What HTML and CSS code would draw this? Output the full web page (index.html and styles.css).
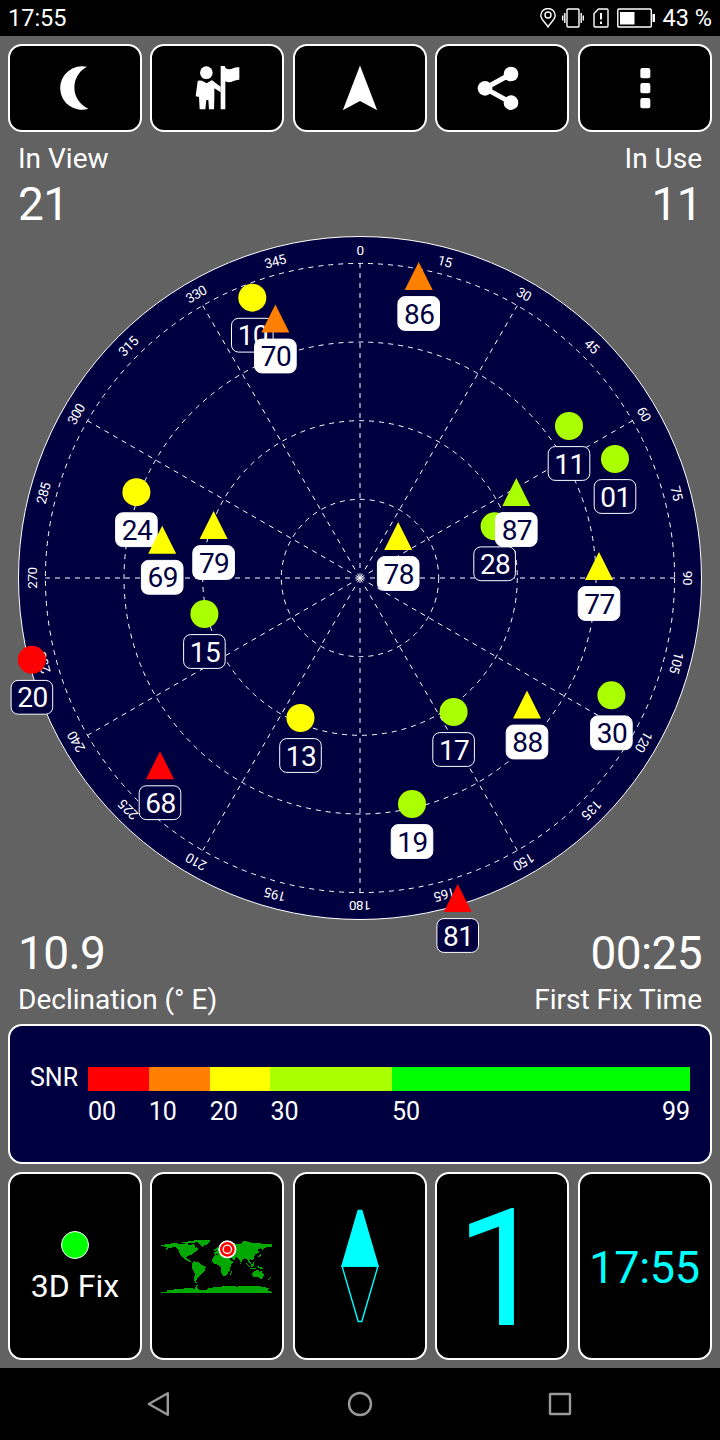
FILE: index.html
```html
<!DOCTYPE html>
<html lang="en">
<head>
    <meta charset="UTF-8">
    <meta name="viewport" content="width=device-width, initial-scale=1.0">
    <title>GPS Status</title>
    <link rel="stylesheet" href="styles.css">
</head>
<body>

    <header class="status-bar">
        <span class="status-time">17:55</span>
        <svg class="pin" width="16" height="20" viewBox="0 0 16 20">
            <path d="M8 19C6 15 .8 11.500 .8 7.500A7.200 7 0 0 1 15.200 7.500C15.200 11.500 10 15 8 19Z"/>
            <circle cx="8" cy="7" r="3"/>
        </svg>
        <svg class="vibrate" width="22" height="20" viewBox="0 0 22 20">
            <rect x="5" y="1" width="12" height="18" rx="1"/>
            <path d="M2.800 5v10M.7 7.500v5M19.200 5v10M21.300 7.500v5"/>
        </svg>
        <svg class="sim" width="16" height="20" viewBox="0 0 16 20">
            <path d="M5.500 1H14a1 1 0 0 1 1 1v16a1 1 0 0 1-1 1H2a1 1 0 0 1-1-1V5.500Z"/>
            <path class="mark" d="M8 5v6.500M8 13.500v2.500"/>
        </svg>
        <svg class="battery" width="38" height="20" viewBox="0 0 38 20">
            <rect x=".8" y="1" width="33.500" height="18" rx="1"/>
            <path class="fill" d="M3 4h14.500v12.500H3zM35.500 6H38v8h-2.500z"/>
        </svg>
        <span class="status-level">43 %</span>
    </header>

    <main class="app">
        <nav class="toolbar">
            <button class="card tool">
                <svg class="icon" viewBox="0 0 44 44"><path d="M34 .8A21.800 21.800 0 1 0 35.500 42.800A23.200 23.200 0 0 1 34 .8Z"/></svg>
            </button>
            <button class="card tool">
                <svg class="icon" viewBox="0 0 132 132">
                    <circle cx="34" cy="20" r="19"/>
                    <path d="M8 45Q9 42 21 44L35 52L50 43Q54 43 58 48L77 62V79L58 67V94Q58 97 57 130H42L40 102H34L31 130H14L12 93L2 91Z"/>
                    <path d="M77 0H89L92 7C108 16 114 2 133 4V41C116 40 108 55 91 46V130H77Z"/>
                </svg>
            </button>
            <button class="card tool">
                <svg class="icon" viewBox="0 0 44 44"><path d="M22-.5L39.200 44.200L22 35L4.800 44.200Z"/></svg>
            </button>
            <button class="card tool">
                <svg class="icon" viewBox="0 0 132 132">
                    <path class="link" d="M93 24L15 67L93 110"/>
                    <circle cx="93" cy="24" r="22"/>
                    <circle cx="15" cy="67" r="22"/>
                    <circle cx="93" cy="110" r="22"/>
                </svg>
            </button>
            <button class="card tool">
                <svg class="icon" viewBox="0 0 132 132">
                    <rect x="52" y="6" width="30" height="31" rx="6"/>
                    <rect x="52" y="51" width="30" height="31" rx="6"/>
                    <rect x="52" y="96" width="30" height="31" rx="6"/>
                </svg>
            </button>
        </nav>

        <section class="stats stats-top">
            <div class="stat">
                <div class="stat-label">In View</div>
                <div class="stat-value">21</div>
            </div>
            <div class="stat right">
                <div class="stat-label">In Use</div>
                <div class="stat-value">11</div>
            </div>
        </section>

        <svg class="sky" id="sky" width="720" height="684" viewBox="-360 -342 720 684">
            <circle class="disc" r="341.500"/>
            <g class="grid" id="grid">
                <circle r="78.700"/>
                <circle r="157.300"/>
                <circle r="236"/>
                <circle r="314.600"/>
            </g>
            <g id="degrees"></g>
            <g id="satellites"></g>
        </svg>

        <section class="stats stats-bottom">
            <div class="stat">
                <div class="stat-value">10.9</div>
                <div class="stat-label">Declination (° E)</div>
            </div>
            <div class="stat right">
                <div class="stat-value">00:25</div>
                <div class="stat-label">First Fix Time</div>
            </div>
        </section>

        <section class="card snr">
            <div class="snr-title">SNR</div>
            <div class="snr-bar">
                <div class="s10 red"></div>
                <div class="s10 orange"></div>
                <div class="s10 yellow"></div>
                <div class="s20 lime"></div>
                <div class="s49 green"></div>
            </div>
            <div class="snr-scale">
                <div class="s10">00</div>
                <div class="s10">10</div>
                <div class="s10">20</div>
                <div class="s20">30</div>
                <div class="s49"><span>50</span><span>99</span></div>
            </div>
        </section>

        <section class="tiles">
            <div class="card tile fix">
                <div class="fix-dot"></div>
                <div class="fix-text">3D Fix</div>
            </div>
            <div class="card tile">
                <svg class="map" width="112" height="55" viewBox="36 42 336 165">
                    <g class="land">
                        <!-- Americas -->
                        <path d="M36 60H48V57H66V54H84L90 57H102L111 54L117 60H126L132 57L138 63V69L144 66L147 72L138 81L132 84L126 93L123 90L114 93L111 99L117 102L120 105L126 108L123 111L111 105L102 99L93 87L90 78L84 69L75 66L60 69L51 75L54 66L36 63Z"/>
                        <path d="M96 51H111L120 48H132L141 51L132 54H120L114 57L99 54ZM132 45H180L186 48L177 54L171 60H165L159 66L153 60L150 54L141 51Z"/>
                        <path d="M129 115L135 109L147 111L159 120L171 126L168 135L159 144L156 150L147 156L144 162L141 168L144 174H138L135 162L138 147L132 135L129 126Z"/>
                        <!-- Africa and Eurasia -->
                        <path d="M192 96L198 90L213 87L225 93L240 94L246 108L255 107L246 120L243 135L237 144L231 153H222L216 141V129L210 120L195 117L189 108Z"/>
                        <path d="M198 90L195 81L204 78L198 72L204 66L210 69L216 57L228 54L252 54L261 57L273 57L285 48L300 51L312 54H330L342 57H369V66L354 66L345 69L342 78L336 69L327 72L330 84L318 87L315 99L309 105L303 102L300 108L306 114L303 117L297 108L291 102L285 99L276 114L270 102L261 96L255 108L246 96L240 90L225 87L216 84L204 87Z"/>
                        <path d="M195 72H201V78H195ZM246 138H249L246 150H243ZM333 87H336V93L327 96V93L333 90ZM273 114H276V117H273ZM312 111H315V120H312ZM291 114L303 123L300 126L291 117ZM306 117L315 120L312 126H306ZM324 123L342 129L339 132L327 129ZM303 129H321V132H303Z"/>
                        <!-- Oceania -->
                        <path d="M309 144L318 138L324 135H330V141L336 135L345 150L342 159L336 162L327 156L312 156ZM360 159L366 153V159L357 165Z"/>
                        <!-- Antarctica -->
                        <path d="M36 201H54V195H69L81 192H99L108 189H132V192H138L141 180H147L144 189L150 195H171L180 189L204 186L231 183H258L264 186L270 183H327L342 186L360 189L354 195L369 201V204H36Z"/>
                    </g>
                    <circle class="white" cx="235" cy="73" r="27"/>
                    <circle class="red-fill" cx="235" cy="73" r="22"/>
                    <circle class="white" cx="235" cy="73" r="14.500"/>
                    <circle class="red-fill" cx="235" cy="73" r="10.500"/>
                </svg>
            </div>
            <div class="card tile">
                <svg class="compass" width="40" height="114" viewBox="0 0 40 114">
                    <path class="north" d="M18.200 1.500H21.800L38 57H2Z"/>
                    <path d="M2 57H38L21.800 112.500H18.200Z"/>
                </svg>
            </div>
            <div class="card tile big">1</div>
            <div class="card tile clock">17:55</div>
        </section>
    </main>

    <footer class="nav-bar">
        <div><svg width="24" height="26" viewBox="0 0 24 26"><path d="M20.800 2.200V23.800L1.800 13Z"/></svg></div>
        <div><svg width="26" height="26" viewBox="0 0 26 26"><circle cx="13" cy="13" r="11"/></svg></div>
        <div><svg width="26" height="26" viewBox="0 0 26 26"><rect x="3" y="3" width="20" height="20" rx=".5"/></svg></div>
    </footer>

    <script>
        const NS = 'http://www.w3.org/2000/svg';

        function add(parent, name, attrs, text) {
            const el = document.createElementNS(NS, name);
            for (const key in attrs) el.setAttribute(key, attrs[key]);
            if (text) el.textContent = text;
            parent.appendChild(el);
            return el;
        }

        const grid = document.getElementById('grid');
        const degrees = document.getElementById('degrees');
        const satellites = document.getElementById('satellites');

        for (let a = 0; a < 360; a += 30) {
            const rad = a * Math.PI / 180;
            add(grid, 'line', { x1: 0, y1: 0, x2: 314.6 * Math.sin(rad), y2: -314.6 * Math.cos(rad) });
        }
        for (let a = 0; a < 360; a += 15) {
            add(degrees, 'text', { class: 'degree', y: -323, transform: `rotate(${a})` }, String(a));
        }

        // id, x, y (from the zenith), shape, colour, used in fix
        const list = [
            ['01', 255, -119, 'circle', 'lime', false],
            ['10', -107.7, -280.3, 'circle', 'yellow', false],
            ['11', 209, -152, 'circle', 'lime', false],
            ['13', -59.5, 140, 'circle', 'yellow', false],
            ['15', -155.6, 36, 'circle', 'lime', false],
            ['17', 93.6, 134, 'circle', 'lime', false],
            ['19', 52, 226, 'circle', 'lime', true],
            ['20', -328.1, 81.8, 'circle', 'red', false],
            ['24', -223.6, -85.8, 'circle', 'yellow', true],
            ['28', 134.6, -51.7, 'circle', 'lime', false],
            ['30', 251.4, 117.3, 'circle', 'lime', true],
            ['68', -200, 187.2, 'triangle', 'red', false],
            ['69', -197.8, -38.2, 'triangle', 'yellow', true],
            ['70', -84.6, -259.5, 'triangle', 'orange', true],
            ['77', 239, -12, 'triangle', 'yellow', true],
            ['78', 38.2, -42, 'triangle', 'yellow', true],
            ['79', -146.4, -53, 'triangle', 'yellow', true],
            ['81', 97.7, 320, 'triangle', 'red', false],
            ['86', 58.7, -302, 'triangle', 'orange', true],
            ['87', 156.3, -86, 'triangle', 'lime', true],
            ['88', 167, 126.5, 'triangle', 'yellow', true]
        ];

        list.forEach(([id, x, y, shape, color, used]) => {
            const g = add(satellites, 'g', { class: used ? 'sat used' : 'sat', transform: `translate(${x} ${y})` });
            if (shape === 'circle') {
                add(g, 'circle', { class: color, r: 14 });
            } else {
                add(g, 'path', { class: color, d: 'M0-14L14 14H-14Z' });
            }
            add(g, 'rect', { class: 'tag', x: -20.8, y: 20.6, width: 41.6, height: 33.8, rx: 7 });
            add(g, 'text', { class: 'tag-text', x: 0.5, y: 47.7 }, id);
        });
    </script>

</body>
</html>
```
FILE: styles.css
```css
* {
    box-sizing: border-box;
}
body {
    margin: 0;
    width: 720px;
    height: 1440px;
    display: flex;
    flex-direction: column;
    overflow: hidden;
    background: #626262;
    color: #fff;
    font-family: Roboto, "Liberation Sans", sans-serif;
}

/* system bars */
.status-bar {
    height: 36px;
    padding: 0 8px;
    display: flex;
    align-items: center;
    background: #000;
    font-size: 23.5px;
    line-height: 37px;
}
.status-time {
    flex: 1;
}
.status-bar svg {
    fill: none;
    stroke: #fff;
    stroke-width: 1.4;
}
.pin {
    margin-right: 6px;
}
.vibrate {
    margin-right: 9px;
}
.sim {
    margin-right: 8px;
}
.battery {
    margin-right: 8px;
}
.sim .mark {
    stroke-width: 2;
}
.battery .fill {
    fill: #fff;
    stroke: none;
}
.nav-bar {
    height: 72px;
    display: flex;
    justify-content: center;
    background: #000;
}
.nav-bar div {
    width: 200px;
    display: flex;
    align-items: center;
    justify-content: center;
}
.nav-bar div:first-child {
    padding-right: 3px;
}
.nav-bar svg {
    fill: none;
    stroke: #999;
    stroke-width: 2.4;
    stroke-linejoin: round;
}

/* app */
.app {
    height: 1332px;
    display: flex;
    flex-direction: column;
}
.card {
    border: 2px solid #fff;
    border-radius: 14px;
    background: #000;
}
.toolbar, .tiles {
    padding: 0 8px;
    display: grid;
    grid-template-columns: repeat(5, 134px);
    column-gap: 8.4px;
}
.toolbar {
    margin-top: 8px;
}
.tool {
    height: 88px;
    padding: 0;
    display: flex;
    align-items: center;
    justify-content: center;
}
.icon {
    width: 44px;
    height: 44px;
    fill: #fff;
    overflow: visible;
}
.icon .link {
    fill: none;
    stroke: #fff;
    stroke-width: 15;
}

.stats {
    padding: 0 18px;
    display: flex;
    justify-content: space-between;
}
.stats-top {
    height: 104px;
    padding-top: 9px;
}
.stats-bottom {
    height: 104px;
    padding-top: 6px;
}
.stat-label {
    font-size: 28px;
    line-height: 36px;
}
.stat-value {
    font-size: 46px;
    line-height: 54px;
    letter-spacing: -.6px;
}
.stats-bottom .stat-label {
    margin-top: 2px;
}
.right {
    text-align: right;
}

/* sky plot */
.sky {
    flex: none;
    overflow: visible;
    position: relative;
}
.disc {
    fill: #000040;
    stroke: #fff;
    stroke-width: 1;
}
.grid {
    fill: none;
    stroke: #fff;
    stroke-width: 1;
    stroke-dasharray: 5 5;
}
.degree {
    fill: #fff;
    font-size: 13.5px;
    letter-spacing: -.4px;
    text-anchor: middle;
}
.tag {
    fill: #000040;
    stroke: #fff;
    stroke-width: 1;
}
.tag-text {
    fill: #fff;
    font-size: 28px;
    letter-spacing: -.6px;
    text-anchor: middle;
}
.used .tag {
    fill: #fff;
}
.used .tag-text {
    fill: #000040;
}
.red {
    fill: #f00;
    background: #f00;
}
.orange {
    fill: #ff8000;
    background: #ff8000;
}
.yellow {
    fill: #ff0;
    background: #ff0;
}
.lime {
    fill: #aaff00;
    background: #aaff00;
}
.green {
    background: #0f0;
}

/* snr legend */
.snr {
    height: 140px;
    margin: 0 8px;
    padding: 41px 20px 0;
    display: grid;
    grid-template-columns: 58px 602px;
    grid-template-rows: 24px 42px;
    background: #000040;
    font-size: 25px;
}
.snr-title {
    line-height: 22px;
}
.snr-bar, .snr-scale {
    display: flex;
}
.snr-scale {
    grid-column: 2;
    line-height: 42px;
}
.s10 {
    flex: 10 0 0;
}
.s20 {
    flex: 20 0 0;
}
.s49 {
    flex: 49 0 0;
}
.snr-scale .s49 {
    display: flex;
    justify-content: space-between;
}

/* bottom tiles */
.tiles {
    margin-top: 8px;
}
.tile {
    height: 188px;
    display: flex;
    align-items: center;
    justify-content: center;
    color: #0ff;
}
.fix {
    flex-direction: column;
    justify-content: flex-start;
    padding-top: 57px;
    color: #fff;
}
.fix-dot {
    width: 28px;
    height: 28px;
    border: 1.5px solid #fff;
    border-radius: 50%;
    background: #0f0;
}
.fix-text {
    margin-top: 6px;
    font-size: 32px;
    line-height: 42px;
}
.land {
    fill: #00a800;
    shape-rendering: crispEdges;
}
.white {
    fill: #fff;
}
.red-fill {
    fill: #f00;
}
.compass {
    fill: none;
    stroke: #0ff;
    stroke-width: 1.4;
}
.compass .north {
    fill: #0ff;
}
.big {
    padding: 5px 1px 0 0;
    font-size: 164px;
    line-height: 180px;
}
.clock {
    padding-top: 3px;
    font-size: 45px;
    letter-spacing: -.3px;
}
```
